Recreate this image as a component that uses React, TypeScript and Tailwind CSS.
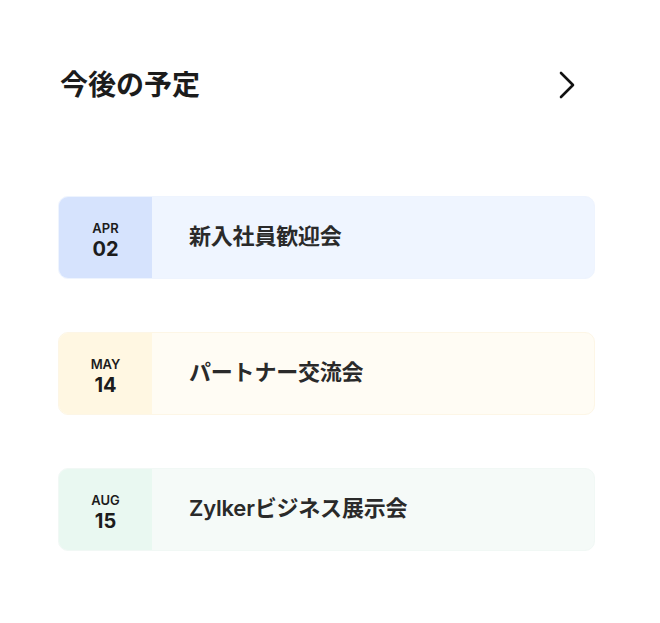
import React from "react";

const events = [
  { m: "APR", d: "02", title: "新入社員歓迎会", dateBg: "bg-[#d6e3fd]", bodyBg: "bg-[#eff5ff]", border: "border-[#eef4fe]" },
  { m: "MAY", d: "14", title: "パートナー交流会", dateBg: "bg-[#fff7e2]", bodyBg: "bg-[#fffcf4]", border: "border-[#fdf6e6]" },
  { m: "AUG", d: "15", title: "Zylkerビジネス展示会", dateBg: "bg-[#e9f8f1]", bodyBg: "bg-[#f5faf8]", border: "border-[#f1f8f5]" },
];

export default function App() {
  return (
    <div
      className="w-[660px] h-[623px] bg-white pl-[58px] pt-[65px]"
      style={{ fontFamily: 'Inter, "Noto Sans CJK JP", sans-serif' }}
    >
      <div className="w-[537px] flex items-center justify-between">
        <h1 className="text-[28px] leading-[40px] font-bold text-[#1c1c1c] pl-[2px]">今後の予定</h1>
        <svg width="24" height="30" viewBox="0 0 24 30" className="mr-[15px]">
          <path d="M5 3 L17 15 L5 27" fill="none" stroke="#111" strokeWidth="2.6" strokeLinecap="round" strokeLinejoin="round" />
        </svg>
      </div>
      <div className="mt-[91px] w-[537px] flex flex-col gap-[53px]">
        {events.map((e) => (
          <div key={e.m} className={`flex h-[83px] rounded-[10px] overflow-hidden border ${e.border} ${e.bodyBg}`}>
            <div className={`w-[93px] ${e.dateBg} flex flex-col items-center justify-center pt-[7px] text-[#1c1c1c] font-semibold`}>
              <div className="text-[13px] leading-[17px]">{e.m}</div>
              <div className="text-[20px] leading-[25px] font-bold">{e.d}</div>
            </div>
            <div className="flex items-center pl-[37px] pb-[2px] text-[22px] font-semibold text-[#2a2a2a] tracking-[-0.2px]">{e.title}</div>
          </div>
        ))}
      </div>
    </div>
  );
}
